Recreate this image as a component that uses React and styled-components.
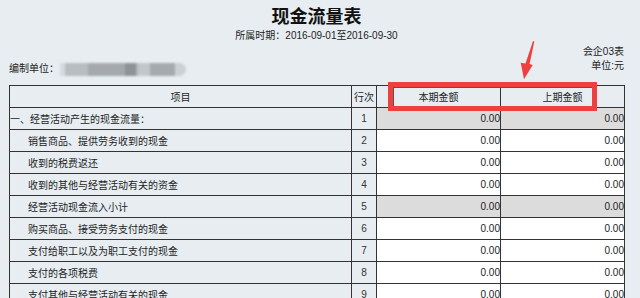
import styled, { createGlobalStyle } from 'styled-components';

const GlobalStyle = createGlobalStyle`
  html, body {
    margin: 0;
    padding: 0;
    background: #e7edf1;
  }
  body {
    font-family: "Liberation Sans", "Noto Sans CJK SC", sans-serif;
    color: #1d1d1d;
    overflow: hidden;
  }
`;

const rows = [
  { no: 1, label: '一、经营活动产生的现金流量：', top: true, shaded: true },
  { no: 2, label: '销售商品、提供劳务收到的现金' },
  { no: 3, label: '收到的税费返还' },
  { no: 4, label: '收到的其他与经营活动有关的资金' },
  { no: 5, label: '经营活动现金流入小计', shaded: true },
  { no: 6, label: '购买商品、接受劳务支付的现金' },
  { no: 7, label: '支付给职工以及为职工支付的现金' },
  { no: 8, label: '支付的各项税费' },
  { no: 9, label: '支付其他与经营活动有关的现金' },
];

const blurBlocks = [
  { w: 5, c: '#d6dadd' },
  { w: 23, c: '#b9bdc1' },
  { w: 37, c: '#a5a9ad' },
  { w: 11, c: '#8f9397' },
  { w: 2, c: '#b0b4b8' },
  { w: 12, c: '#c3c7cb' },
  { w: 25, c: '#a6aaae' },
  { w: 11, c: '#ccd0d3' },
];

function App() {
  return (
    <>
      <GlobalStyle />
      <Page>
        <Head>
          <Title>现金流量表</Title>
          <Period>所属时期：2016-09-01至2016-09-30</Period>
        </Head>
        <InfoRow>
          <Org>
            编制单位：
            <Blurred>
              {blurBlocks.map((b, i) => (
                <BlurPart key={i} $w={b.w} $c={b.c} />
              ))}
            </Blurred>
          </Org>
          <Meta>
            <div>会企03表</div>
            <div>单位:元</div>
          </Meta>
        </InfoRow>
        <Table>
          <colgroup>
            <col style={{ width: 342 }} />
            <col style={{ width: 25 }} />
            <col style={{ width: 124 }} />
            <col style={{ width: 124 }} />
          </colgroup>
          <thead>
            <tr>
              <HeadCell>项目</HeadCell>
              <HeadCell>行次</HeadCell>
              <HeadCell>本期金额</HeadCell>
              <HeadCell>上期金额</HeadCell>
            </tr>
          </thead>
          <tbody>
            {rows.map((r) => (
              <tr key={r.no}>
                <ItemCell $top={r.top}>{r.label}</ItemCell>
                <NumCell>{r.no}</NumCell>
                <AmountCell $shaded={r.shaded}>0.00</AmountCell>
                <AmountCell $shaded={r.shaded}>0.00</AmountCell>
              </tr>
            ))}
          </tbody>
        </Table>
        <Highlight />
        <Arrow viewBox="0 0 24 46" width="24" height="46">
          <polygon
            points="18,3 19.3,3.4 14.6,26 17.7,27 9,41.3 5.7,24.7 10.5,25.5"
            fill="#f03f3f"
          />
        </Arrow>
      </Page>
    </>
  );
}

const Page = styled.div`
  position: relative;
  width: 640px;
  height: 298px;
  padding-left: 9px;
  box-sizing: border-box;
  overflow: hidden;
`;

const Head = styled.div`
  width: 615px;
  text-align: center;
  padding-top: 6px;
`;

const Title = styled.div`
  font-family: "Noto Sans CJK SC", sans-serif;
  font-size: 18px;
  font-weight: 700;
  line-height: 18px;
  color: #111;
`;

const Period = styled.div`
  margin-top: 6px;
  font-size: 10px;
  line-height: 12px;
`;

const InfoRow = styled.div`
  width: 615px;
  margin-top: 3px;
  display: flex;
  justify-content: space-between;
  align-items: flex-start;
  font-size: 10px;
`;

const Org = styled.div`
  margin-top: 17px;
  display: flex;
  align-items: center;
  line-height: 14px;
`;

const Blurred = styled.div`
  display: flex;
  height: 13px;
  margin-left: 1px;
  filter: blur(1.2px);
`;

const BlurPart = styled.span`
  width: ${(p) => p.$w}px;
  background: ${(p) => p.$c};
  &:last-child {
    border-radius: 0 7px 7px 0;
  }
`;

const Meta = styled.div`
  text-align: right;
  line-height: 14px;
`;

const Table = styled.table`
  margin-top: 9px;
  width: 615px;
  table-layout: fixed;
  border-collapse: collapse;
  font-size: 10px;

  tr {
    height: 22px;
  }
  td,
  th {
    border: 1px solid #333;
    padding: 0;
    white-space: nowrap;
    overflow: hidden;
  }
`;

const HeadCell = styled.th`
  font-weight: 400;
  text-align: center;
`;

const ItemCell = styled.td`
  padding-left: ${(p) => (p.$top ? 0 : 18)}px !important;
`;

const NumCell = styled.td`
  text-align: center;
  color: #333;
`;

const AmountCell = styled.td`
  text-align: right;
  background: ${(p) => (p.$shaded ? '#dcdcdc' : '#ffffff')};
`;

const Highlight = styled.div`
  position: absolute;
  left: 388px;
  top: 82px;
  width: 209px;
  height: 29px;
  box-sizing: border-box;
  border: 5px solid #ef3f3f;
  box-shadow: inset 1px 1px 0 #555;
`;

const Arrow = styled.svg`
  position: absolute;
  left: 515px;
  top: 38px;
`;

export default App;
